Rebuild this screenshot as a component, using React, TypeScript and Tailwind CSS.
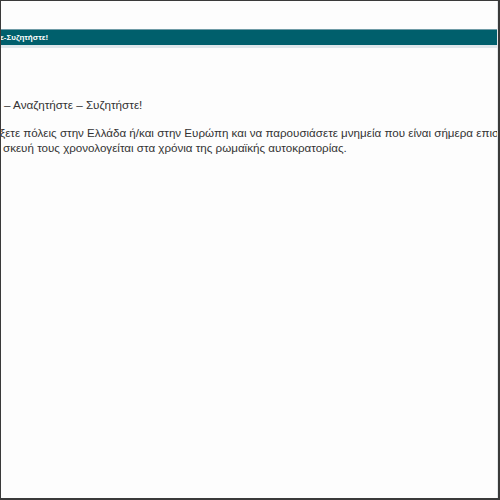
export default function App() {
  return (
    <div className="h-[500px] w-[500px] overflow-hidden border-t border-l border-r-2 border-b-2 border-[#3a3a3a] bg-[#fdfdfd] font-['Liberation_Sans',Arial,sans-serif] text-[#333]">
      <div className="flex h-full flex-col border-r border-[#e4e8ea]">
        {/* top spacer */}
        <div className="h-[28px] shrink-0" />

        {/* section bar */}
        <div className="shrink-0 border-t border-[#6f9ba6] bg-[#005f6c]">
          <div className="flex h-[15px] items-center whitespace-nowrap -ml-[1px] text-[8px] font-bold leading-none text-white">
            ε-Συζητήστε!
          </div>
        </div>
        <div className="h-[3px] shrink-0 bg-[#dfe7eb]" />

        {/* content */}
        <div className="overflow-hidden pt-[49px]">
          <h2 className="whitespace-nowrap pl-[3px] text-[11.7px] leading-[16px] font-normal">
            – Αναζητήστε – Συζητήστε!
          </h2>
          <div className="mt-[12px] text-[11.6px] leading-[15px]">
            <p className="-ml-[1px] whitespace-nowrap">
              ξετε πόλεις στην Ελλάδα ή/και στην Ευρώπη και να παρουσιάσετε μνημεία που είναι σήμερα επισκέψιμα
            </p>
            <p className="ml-[2px] whitespace-nowrap">
              σκευή τους χρονολογείται στα χρόνια της ρωμαϊκής αυτοκρατορίας.
            </p>
          </div>
        </div>
      </div>
    </div>
  );
}
